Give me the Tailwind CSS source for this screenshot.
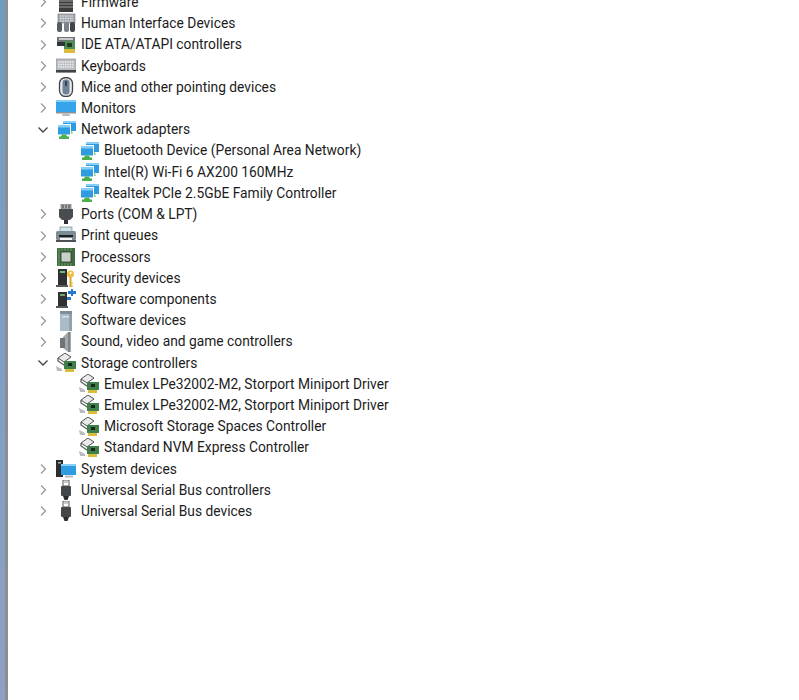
<!DOCTYPE html>
<html lang="en">
<head>
<meta charset="UTF-8">
<title>Device Manager</title>
<script src="https://cdn.jsdelivr.net/npm/@tailwindcss/browser@4"></script>
</head>
<body class="bg-white">
<svg width="0" height="0" class="absolute">
  <defs>
    <symbol id="chev-r" viewBox="0 0 12 12"><path d="M4 1.500 8.500 6 4 10.500" fill="none" stroke="#9a9a9a" stroke-width="1.300"/></symbol>
    <symbol id="chev-d" viewBox="0 0 12 12"><path d="M1.500 3.500 6 8 10.500 3.500" fill="none" stroke="#444" stroke-width="1.300"/></symbol>
    <symbol id="firmware" viewBox="0 0 20 20"><rect x="3" y="0" width="14" height="20" fill="#3c3c3c"/><path d="M3 3h14M3 6h14M3 9h14M3 12h14M3 15h14" stroke="#9a9a9a"/></symbol>
    <symbol id="hid" viewBox="0 0 20 20"><rect x="2" y="1" width="17" height="9" fill="#a9adb2" stroke="#6b7076" stroke-width=".6"/><path d="M4 3h13M4 5.500h13M4 8h13" stroke="#e3e5e7" stroke-dasharray="1.500 1"/><rect x="1" y="9" width="5" height="10" rx="2" fill="#565c63"/><rect x="8" y="9" width="5" height="10" rx="2" fill="#7b828a"/><rect x="14" y="9" width="5" height="10" rx="2" fill="#3f454b"/></symbol>
    <symbol id="ide" viewBox="0 0 20 20"><rect x="1" y="2" width="18" height="5" fill="#6f7478"/><rect x="3" y="3" width="14" height="2" fill="#c8cbcd"/><rect x="8" y="6" width="11" height="8" fill="#4f8f55"/><rect x="1" y="7" width="8" height="4" fill="#30353a"/><rect x="11" y="8" width="5" height="4" fill="#1f3a27"/><rect x="8" y="14" width="11" height="4" fill="#d9bc3c"/></symbol>
    <symbol id="kbd" viewBox="0 0 20 20"><rect x="0" y="3" width="20" height="13" fill="#b9bcc0" stroke="#80858a" stroke-width=".6"/><path d="M2 6h16M2 8.500h16M2 11h16" stroke="#e9eaeb" stroke-width="1.400" stroke-dasharray="1.600 .7"/><rect x="0" y="14" width="20" height="2.500" fill="#3f4347"/></symbol>
    <symbol id="mouse" viewBox="0 0 20 20"><rect x="3.500" y="0.500" width="13" height="19" rx="6" fill="#e8eaec" stroke="#3f4347" stroke-width="1.300"/><rect x="6.500" y="2.500" width="7" height="15" rx="3" fill="#6f8299"/><rect x="9" y="4" width="2" height="5" fill="#39424c"/></symbol>
    <symbol id="monitor" viewBox="0 0 20 20"><rect x="0" y="2" width="20" height="13" fill="#36a4ea"/><rect x="0" y="2" width="20" height="2" fill="#7fcdf7"/><rect x="0" y="14" width="20" height="1.500" fill="#8b9298"/><path d="M7 15.500h6l1 2.500H6z" fill="#b6bbc0"/></symbol>
    <symbol id="net" viewBox="0 0 20 20"><path d="M9 11h7l1 3H8z" fill="#9fcf8e"/><rect x="7" y="1" width="13" height="10" fill="#2f9be0"/><rect x="7" y="1" width="13" height="2" fill="#86d0f7"/><rect x="1" y="4" width="14" height="11" fill="#fff"/><rect x="2" y="5" width="12" height="9.500" fill="#2f9be0"/><rect x="2" y="5" width="12" height="2.500" fill="#86d0f7"/><path d="M6 14.500h4l1 2h2v2.500H3v-2.500h2z" fill="#4cae4f"/></symbol>
    <symbol id="port" viewBox="0 0 20 20"><rect x="5" y="0" width="10" height="5" fill="#b5b7b9" stroke="#555" stroke-width=".6"/><path d="M7 1v3M10 1v3M13 1v3" stroke="#333"/><path d="M3 5h14v8l-3 3H6l-3-3z" fill="#4a4d50"/><rect x="8" y="16" width="4" height="4" fill="#2e3033"/></symbol>
    <symbol id="printer" viewBox="0 0 20 20"><rect x="4" y="1" width="12" height="5" fill="#cfe3ea" stroke="#6c7479" stroke-width=".6"/><rect x="0" y="5" width="20" height="9" rx="1.500" fill="#7d8b92"/><rect x="3" y="9" width="14" height="2" fill="#1e2124"/><rect x="4" y="12" width="12" height="4" fill="#f3f3f3"/><rect x="0" y="14" width="20" height="2" fill="#4b5257"/></symbol>
    <symbol id="cpu" viewBox="0 0 20 20"><rect x="1" y="1" width="18" height="18" fill="#3e6b3e"/><rect x="5" y="5" width="10" height="10" fill="#c9cfc9" stroke="#29402a" stroke-width=".8"/><path d="M3 1v18M6 1v3M9 1v3M12 1v3M15 1v3M6 16v3M9 16v3M12 16v3M15 16v3" stroke="#a6c2a0" stroke-width=".5"/></symbol>
    <symbol id="security" viewBox="0 0 20 20"><rect x="2" y="1" width="9" height="16" fill="#2f3133"/><rect x="4" y="3" width="5" height="2" fill="#66c07a"/><rect x="0" y="17" width="12" height="2" fill="#55595c"/><circle cx="14.500" cy="6" r="3.600" fill="#f0c044"/><circle cx="14.500" cy="5" r="1.100" fill="#fff"/><path d="M14.500 9v10" stroke="#dba92c" stroke-width="2"/><path d="M15 15h2M15 18h2" stroke="#dba92c"/></symbol>
    <symbol id="swcomp" viewBox="0 0 20 20"><rect x="2" y="3" width="9" height="14" fill="#2f3133"/><rect x="4" y="5" width="5" height="2" fill="#6fa86f"/><rect x="0" y="17" width="12" height="2" fill="#55595c"/><path d="M12 2h3V0h2v2h3v3h-3v2h-2V5h-3z" fill="#2478cf"/><rect x="11" y="8" width="4" height="3" fill="#2478cf"/></symbol>
    <symbol id="swdev" viewBox="0 0 20 20"><rect x="4" y="0" width="12" height="20" rx="1" fill="#a9bbc7"/><rect x="4" y="0" width="12" height="3" fill="#7e8e98"/><rect x="6" y="5" width="8" height="1.500" fill="#d9e2e8"/><rect x="13" y="3" width="3" height="17" fill="#8fa2ae"/></symbol>
    <symbol id="sound" viewBox="0 0 20 20"><path d="M7 5l5-5h3v20h-3l-5-4z" fill="#a4a8ab"/><rect x="4" y="6" width="5" height="10" fill="#6f7478"/><path d="M12 0h2v20h-2z" fill="#7f8487"/></symbol>
    <symbol id="storage" viewBox="0 0 20 20"><path d="M2 5 9 0l6 4-7 5z" fill="#e8eaeb" stroke="#4d5153"/><path d="M2 5v3l6 4 3-2" fill="none" stroke="#5b5f61" stroke-width="1.300"/><rect x="8" y="8" width="12" height="8" fill="#3e7f4b"/><rect x="12" y="10" width="4" height="3" fill="#14291a"/><path d="M0 13l6 3v2H1z" fill="#b8bcbe"/><rect x="9" y="16" width="9" height="3" fill="#d9bc3c"/></symbol>
    <symbol id="system" viewBox="0 0 20 20"><rect x="0" y="1" width="7" height="17" fill="#2b2e31"/><rect x="2" y="3" width="3" height="1.500" fill="#9fb0bb"/><rect x="5" y="5" width="15" height="11" fill="#2f9be0"/><rect x="5" y="5" width="15" height="2" fill="#86d0f7"/><path d="M9 16.500h8v2H9z" fill="#b6bbc0"/></symbol>
    <symbol id="usb" viewBox="0 0 20 20"><rect x="7" y="0" width="6" height="6" fill="#fff" stroke="#55585a"/><path d="M8.500 2h1M10.500 2h1" stroke="#333"/><rect x="5" y="6" width="10" height="10" rx="1" fill="#44474a"/><path d="M7 16h6l-1.500 4h-3z" fill="#292b2d"/></symbol>
  </defs>
</svg>

<div class="relative h-[700px] overflow-hidden flex font-['Roboto',sans-serif] text-[13.8px] text-[#1c1c1c]">
  <!-- edge of the window behind -->
  <div class="w-[5px] h-full shrink-0 bg-gradient-to-b from-[#6f9cc2] to-[#8ea0c4]"></div>
  <div class="w-[3px] h-full shrink-0 bg-[#8b8f93]"></div>

  <ul class="-mt-[8.4px] h-fit pl-[29px]">
    <li class="flex items-center h-[21.22px]"><svg class="w-3 h-3 mr-[7px]"><use href="#chev-r"/></svg><svg class="w-5 h-5 mr-[5px]"><use href="#firmware"/></svg>Firmware</li>
    <li class="flex items-center h-[21.22px]"><svg class="w-3 h-3 mr-[7px]"><use href="#chev-r"/></svg><svg class="w-5 h-5 mr-[5px]"><use href="#hid"/></svg>Human Interface Devices</li>
    <li class="flex items-center h-[21.22px]"><svg class="w-3 h-3 mr-[7px]"><use href="#chev-r"/></svg><svg class="w-5 h-5 mr-[5px]"><use href="#ide"/></svg>IDE ATA/ATAPI controllers</li>
    <li class="flex items-center h-[21.22px]"><svg class="w-3 h-3 mr-[7px]"><use href="#chev-r"/></svg><svg class="w-5 h-5 mr-[5px]"><use href="#kbd"/></svg>Keyboards</li>
    <li class="flex items-center h-[21.22px]"><svg class="w-3 h-3 mr-[7px]"><use href="#chev-r"/></svg><svg class="w-5 h-5 mr-[5px]"><use href="#mouse"/></svg>Mice and other pointing devices</li>
    <li class="flex items-center h-[21.22px]"><svg class="w-3 h-3 mr-[7px]"><use href="#chev-r"/></svg><svg class="w-5 h-5 mr-[5px]"><use href="#monitor"/></svg>Monitors</li>
    <li class="flex items-center h-[21.22px]"><svg class="w-3 h-3 mr-[7px]"><use href="#chev-d"/></svg><svg class="w-5 h-5 mr-[5px]"><use href="#net"/></svg>Network adapters</li>
    <li class="flex items-center h-[21.22px] pl-[42px]"><svg class="w-5 h-5 mr-[5px]"><use href="#net"/></svg>Bluetooth Device (Personal Area Network)</li>
    <li class="flex items-center h-[21.22px] pl-[42px]"><svg class="w-5 h-5 mr-[5px]"><use href="#net"/></svg>Intel(R) Wi-Fi 6 AX200 160MHz</li>
    <li class="flex items-center h-[21.22px] pl-[42px]"><svg class="w-5 h-5 mr-[5px]"><use href="#net"/></svg>Realtek PCIe 2.5GbE Family Controller</li>
    <li class="flex items-center h-[21.22px]"><svg class="w-3 h-3 mr-[7px]"><use href="#chev-r"/></svg><svg class="w-5 h-5 mr-[5px]"><use href="#port"/></svg>Ports (COM &amp; LPT)</li>
    <li class="flex items-center h-[21.22px]"><svg class="w-3 h-3 mr-[7px]"><use href="#chev-r"/></svg><svg class="w-5 h-5 mr-[5px]"><use href="#printer"/></svg>Print queues</li>
    <li class="flex items-center h-[21.22px]"><svg class="w-3 h-3 mr-[7px]"><use href="#chev-r"/></svg><svg class="w-5 h-5 mr-[5px]"><use href="#cpu"/></svg>Processors</li>
    <li class="flex items-center h-[21.22px]"><svg class="w-3 h-3 mr-[7px]"><use href="#chev-r"/></svg><svg class="w-5 h-5 mr-[5px]"><use href="#security"/></svg>Security devices</li>
    <li class="flex items-center h-[21.22px]"><svg class="w-3 h-3 mr-[7px]"><use href="#chev-r"/></svg><svg class="w-5 h-5 mr-[5px]"><use href="#swcomp"/></svg>Software components</li>
    <li class="flex items-center h-[21.22px]"><svg class="w-3 h-3 mr-[7px]"><use href="#chev-r"/></svg><svg class="w-5 h-5 mr-[5px]"><use href="#swdev"/></svg>Software devices</li>
    <li class="flex items-center h-[21.22px]"><svg class="w-3 h-3 mr-[7px]"><use href="#chev-r"/></svg><svg class="w-5 h-5 mr-[5px]"><use href="#sound"/></svg>Sound, video and game controllers</li>
    <li class="flex items-center h-[21.22px]"><svg class="w-3 h-3 mr-[7px]"><use href="#chev-d"/></svg><svg class="w-5 h-5 mr-[5px]"><use href="#storage"/></svg>Storage controllers</li>
    <li class="flex items-center h-[21.22px] pl-[42px]"><svg class="w-5 h-5 mr-[5px]"><use href="#storage"/></svg>Emulex LPe32002-M2, Storport Miniport Driver</li>
    <li class="flex items-center h-[21.22px] pl-[42px]"><svg class="w-5 h-5 mr-[5px]"><use href="#storage"/></svg>Emulex LPe32002-M2, Storport Miniport Driver</li>
    <li class="flex items-center h-[21.22px] pl-[42px]"><svg class="w-5 h-5 mr-[5px]"><use href="#storage"/></svg>Microsoft Storage Spaces Controller</li>
    <li class="flex items-center h-[21.22px] pl-[42px]"><svg class="w-5 h-5 mr-[5px]"><use href="#storage"/></svg>Standard NVM Express Controller</li>
    <li class="flex items-center h-[21.22px]"><svg class="w-3 h-3 mr-[7px]"><use href="#chev-r"/></svg><svg class="w-5 h-5 mr-[5px]"><use href="#system"/></svg>System devices</li>
    <li class="flex items-center h-[21.22px]"><svg class="w-3 h-3 mr-[7px]"><use href="#chev-r"/></svg><svg class="w-5 h-5 mr-[5px]"><use href="#usb"/></svg>Universal Serial Bus controllers</li>
    <li class="flex items-center h-[21.22px]"><svg class="w-3 h-3 mr-[7px]"><use href="#chev-r"/></svg><svg class="w-5 h-5 mr-[5px]"><use href="#usb"/></svg>Universal Serial Bus devices</li>
  </ul>
</div>
</body>
</html>
